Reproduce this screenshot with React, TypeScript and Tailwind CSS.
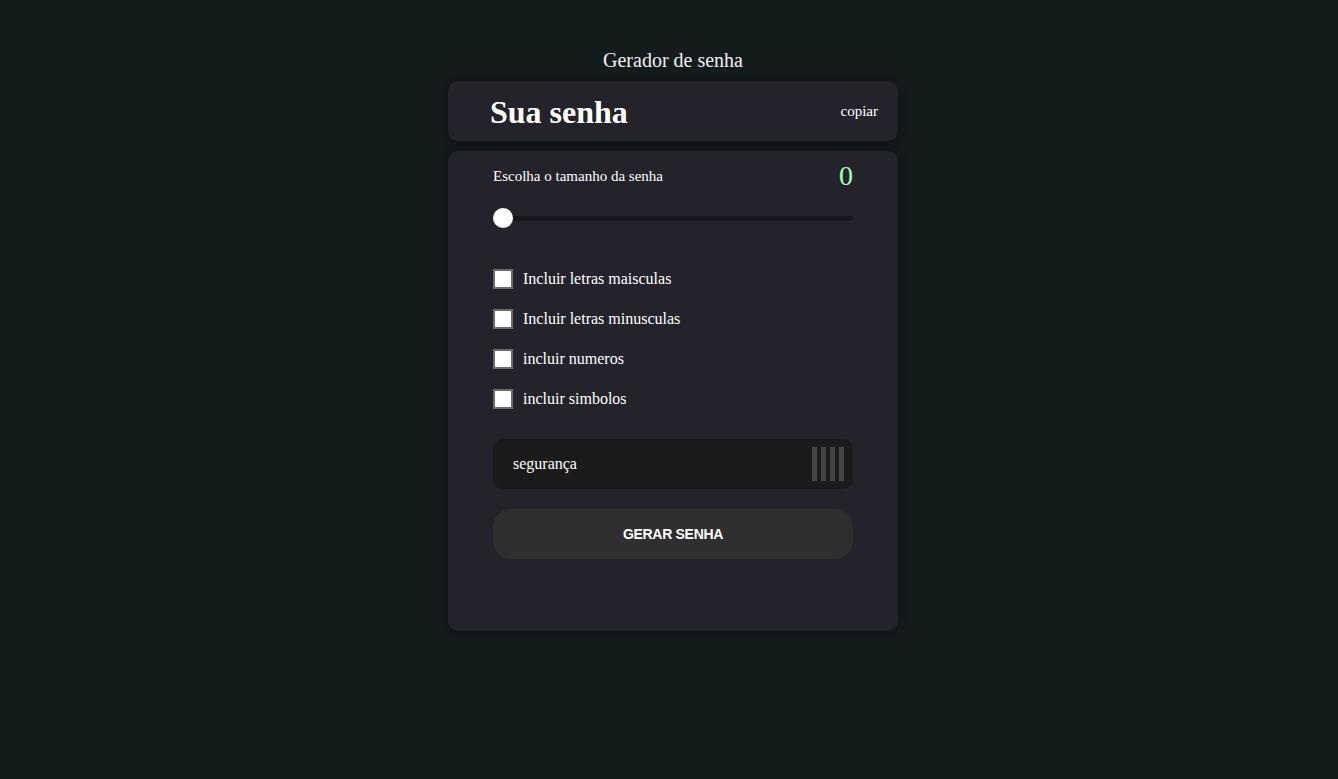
import React, { useState } from 'react';

const options = [
    'Incluir letras maisculas',
    'Incluir letras minusculas',
    'incluir numeros',
    'incluir simbolos',
];

const App: React.FC = () => {
    const [length, setLength] = useState(0);

    return (
        <div className="min-h-screen w-full bg-[#141b1b] text-white font-['Liberation_Serif',serif] pt-[48px] pl-[8px]">
            <div className="w-[450px] mx-auto flex flex-col">
                <h1 className="text-center text-[20px] leading-[24px] text-[#f0eff4] mb-[9px]">Gerador de senha</h1>

                {/* Password display */}
                <div className="h-[60px] rounded-[10px] bg-[#24232c] shadow-[0_0_10px_rgba(0,0,0,0.35)] flex items-center justify-between pl-[42px] pr-[20px]">
                    <span className="text-[32px] font-bold leading-none pt-[2px]">Sua senha</span>
                    <button className="text-[15px] leading-none">copiar</button>
                </div>

                {/* Settings */}
                <div className="mt-[10px] h-[480px] rounded-[10px] bg-[#24232c] shadow-[0_0_10px_rgba(0,0,0,0.35)] px-[45px] pt-[10px]">
                    <div className="flex items-center justify-between h-[30px]">
                        <span className="text-[15px]">Escolha o tamanho da senha</span>
                        <span className="text-[28px] text-[#a4ffaf] leading-none">{length}</span>
                    </div>

                    <div className="relative h-[20px] mt-[17px] flex items-center">
                        <div className="w-full h-[5px] rounded-full bg-[#18171f]" />
                        <div
                            className="absolute top-0 w-[20px] h-[20px] rounded-full bg-white"
                            style={{ left: `${length * 3.4}px` }}
                        />
                        <input
                            type="range"
                            min={0}
                            max={100}
                            value={length}
                            onChange={e => setLength(Number(e.target.value))}
                            className="absolute inset-0 w-full opacity-0 cursor-pointer"
                        />
                    </div>

                    <div className="mt-[41px] flex flex-col gap-[20px]">
                        {options.map(label => (
                            <label key={label} className="flex items-center gap-[10px] h-[20px] text-[16px] cursor-pointer">
                                <span className="w-[20px] h-[20px] bg-white border-2 border-[#6a6a6a] shrink-0" />
                                {label}
                            </label>
                        ))}
                    </div>

                    <div className="mt-[30px] h-[50px] rounded-[10px] bg-[#1b1b1b] flex items-center justify-between pl-[20px] pr-[9px]">
                        <span className="text-[16px]">segurança</span>
                        <div className="flex gap-[4px] h-[34px]">
                            <span className="w-[5px] h-full bg-[#444444]" />
                            <span className="w-[5px] h-full bg-[#444444]" />
                            <span className="w-[5px] h-full bg-[#444444]" />
                            <span className="w-[5px] h-full bg-[#444444]" />
                        </div>
                    </div>

                    <button className="mt-[20px] w-full h-[50px] rounded-[18px] bg-[#2f2f2f] font-['Liberation_Sans',sans-serif] font-bold text-[14px] tracking-[-0.3px]">
                        GERAR SENHA
                    </button>
                </div>
            </div>
        </div>
    );
};

export default App;
